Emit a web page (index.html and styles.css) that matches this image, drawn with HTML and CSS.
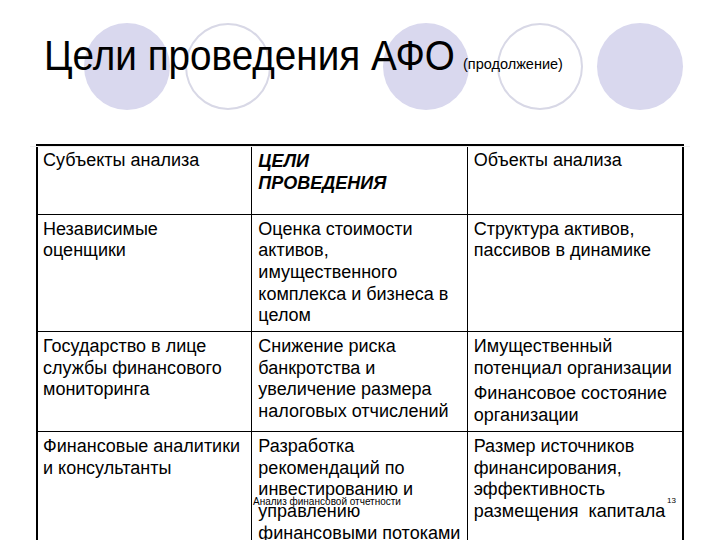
FILE: index.html
```html
<!DOCTYPE html>
<html lang="ru">
<head>
<meta charset="utf-8">
<title>Цели проведения АФО</title>
<link rel="stylesheet" href="styles.css">
</head>
<body>
<div class="slide">
  <header class="head">
    <div class="deco" aria-hidden="true">
      <span class="circle fill c1"></span>
      <span class="circle ring c2"></span>
      <span class="circle fill c3"></span>
      <span class="circle ring c4"></span>
      <span class="circle fill c5"></span>
    </div>
    <h1 class="title"><span class="main">Цели проведения АФО</span><small class="sub">(продолжение)</small></h1>
    <div class="rule"></div>
  </header>
  <table class="grid">
    <tr class="hrow">
      <td>Субъекты анализа</td>
      <td class="bi">ЦЕЛИ<br>ПРОВЕДЕНИЯ</td>
      <td>Объекты анализа</td>
    </tr>
    <tr>
      <td>Независимые оценщики</td>
      <td>Оценка стоимости активов, имущественного комплекса и бизнеса в целом</td>
      <td>Структура активов, пассивов в динамике</td>
    </tr>
    <tr>
      <td>Государство в лице службы финансового мониторинга</td>
      <td>Снижение риска банкротства и увеличение размера налоговых отчислений</td>
      <td class="tight"><p class="para">Имущественный потенциал организации</p><p class="para">Финансовое состояние организации</p></td>
    </tr>
    <tr>
      <td>Финансовые аналитики и консультанты</td>
      <td>Разработка рекомендаций по инвестированию и управлению финансовыми потоками</td>
      <td class="top0">Размер источников финансирования, эффективность размещения&nbsp; капитала</td>
    </tr>
  </table>
  <div class="foot">Анализ финансовой отчетности</div>
  <div class="pnum">13</div>
</div>
</body>
</html>
```

FILE: styles.css
```css
html, body {
  margin: 0;
  padding: 0;
  background: #ffffff;
}
.slide {
  position: relative;
  width: 720px;
  height: 540px;
  overflow: hidden;
  font-family: "Liberation Sans", Arial, sans-serif;
  color: #000;
}
.head {
  position: relative;
  height: 144px;
}
.deco {
  position: absolute;
  left: 0;
  top: 0;
  width: 720px;
  height: 144px;
}
.circle {
  position: absolute;
  top: 23px;
  width: 86px;
  height: 87px;
  border-radius: 50%;
  box-sizing: border-box;
}
.fill { background: #d9d8ee; }
.ring { border: 2px solid #d8d8e6; background: transparent; }
.c1 { left: 84px; }
.c2 { left: 185px; }
.c3 { left: 383px; }
.c4 { left: 497px; }
.c5 { left: 597px; }
.title {
  position: relative;
  display: flex;
  align-items: baseline;
  margin: 0;
  padding: 31px 0 0 44px;
  font-weight: normal;
  font-size: 42px;
  line-height: 50px;
}
.main {
  display: inline-block;
  width: 404px;
  white-space: nowrap;
  transform: scaleX(0.92);
  transform-origin: 0 0;
}
.sub {
  font-size: 14.5px;
  margin-left: 15px;
  position: relative;
  top: -1px;
}
.rule {
  position: relative;
  margin: 56px 30px 0 30px;
  height: 1px;
  background: #eeeeee;
}
.grid {
  margin-left: 36px;
  margin-top: 0;
  border-collapse: collapse;
  border: 2px solid #000;
  table-layout: fixed;
  width: 648px;
  font-size: 18px;
  line-height: 21.7px;
}
.grid td {
  width: 33.33%;
  border: 1px solid #000;
  padding: 4px 6px 4px 6px;
  vertical-align: top;
}
.grid tr:first-child td { border-top: 2px solid #000; }
.grid td:first-child { border-left: 2px solid #000; padding-left: 5px; }
.grid td:last-child { border-right: 2px solid #000; }
.hrow { height: 69px; }
.bi {
  font-weight: bold;
  font-style: italic;
  line-height: 22px;
}
.tight { padding-top: 3px; padding-bottom: 0; }
.para { margin: 0; }
.para + .para { margin-top: 4px; }
.top0 { padding-top: 0; }
.foot {
  position: absolute;
  left: 253px;
  top: 496px;
  font-size: 10px;
  line-height: 11px;
}
.pnum {
  position: absolute;
  left: 667px;
  top: 496px;
  font-size: 8px;
  line-height: 9px;
}
```
